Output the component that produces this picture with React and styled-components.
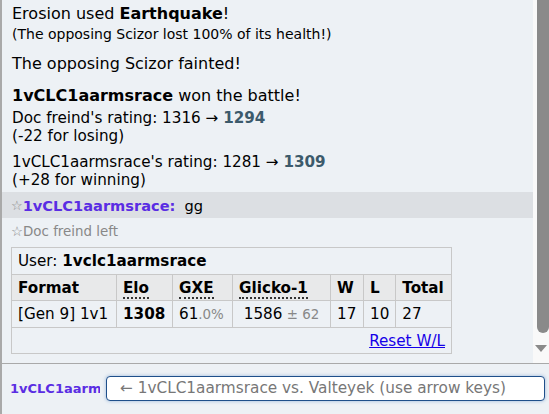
import React from "react";
import styled, { createGlobalStyle } from "styled-components";

const Global = createGlobalStyle`
  html, body { margin: 0; padding: 0; }
  body {
    width: 549px; height: 414px; overflow: hidden;
    background: #edf1f5;
    font-family: "DejaVu Sans", Verdana, sans-serif;
    color: #000;
  }
`;

const Page = styled.div`
  width: 549px;
  height: 414px;
  display: flex;
  flex-direction: column;
  box-sizing: border-box;
  border-left: 2px solid #a9a9a9;
  background: #edf1f5;
`;

const LogArea = styled.div`
  position: relative;
  flex: 1;
  overflow: hidden;
  border-bottom: 1px solid #a9a9a9;
`;

const Log = styled.div`
  padding-top: 4px;
  width: 531px;
  box-sizing: border-box;
`;

const Line = styled.div`
  padding-left: 10px;
  font-size: ${(p) => p.$size || 16}px;
  line-height: ${(p) => p.$lh || 19}px;
  margin-top: ${(p) => p.$mt || 0}px;
`;

const Strong = styled.strong`
  color: ${(p) => p.$color || "inherit"};
`;

const ChatRow = styled.div`
  margin-top: 3px;
  background: #dcdfe3;
  height: 26px;
  display: flex;
  align-items: center;
  padding-left: 9px;
  font-size: 14.6px;
`;

const Star = styled.span`
  color: #888;
  font-size: 13px;
`;

const ChatName = styled.strong`
  color: #5a2de3;
  margin-right: 9px;
`;

const Notice = styled.div`
  margin-top: 6px;
  padding-left: 9px;
  font-size: 13.4px;
  line-height: 16px;
  color: #888;
`;

const Table = styled.table`
  margin: 7px 0 0 9px;
  border-collapse: collapse;
  border: 1px solid #bdbdbd;
  font-size: 15.2px;
  width: 441px;
`;

const Cell = styled.td`
  border: 1px solid #c8c8c8;
  height: ${(p) => p.$h || 25}px;
  padding: 0 6px;
  text-align: ${(p) => p.$align || "left"};
  font-weight: ${(p) => (p.$bold ? "bold" : "normal")};
  white-space: nowrap;
`;

const Head = styled.th`
  border: 1px solid #c8c8c8;
  background: #e8e9ea;
  height: 25px;
  padding: 0 6px;
  text-align: left;
  white-space: nowrap;
  width: ${(p) => p.$w || "auto"};
`;

const Abbr = styled.span`
  border-bottom: 2px dotted #333;
`;

const Faint = styled.small`
  color: #888;
  font-size: 13.4px;
`;

const ResetLink = styled.a`
  color: #1500e8;
  text-decoration: underline;
  cursor: pointer;
`;

const ScrollTrack = styled.div`
  position: absolute;
  top: 0;
  right: 0;
  width: 16px;
  bottom: 0;
  background: #f9f9f9;
`;

const ScrollThumb = styled.div`
  position: absolute;
  top: -10px;
  right: 0;
  width: 12px;
  height: 343px;
  background: #8a8a8a;
  border-radius: 0 0 6px 6px;
`;

const Arrow = styled.div`
  position: absolute;
  right: 2px;
  top: 345px;
  width: 0;
  height: 0;
  border-left: 6px solid transparent;
  border-right: 6px solid transparent;
  border-top: 7px solid #8a8a8a;
`;

const ChatBar = styled.div`
  height: 50px;
  display: flex;
  align-items: center;
  padding: 0 4px 2px 8px;
  box-sizing: border-box;
  gap: 6px;
`;

const BarName = styled.div`
  width: 90px;
  flex: none;
  overflow: hidden;
  white-space: nowrap;
  font-weight: bold;
  color: #5a2de3;
  font-size: 13px;
`;

const Input = styled.div`
  flex: 1;
  height: 25px;
  box-sizing: border-box;
  border: 1px solid #1f4f8a;
  border-radius: 4px;
  background: #fff;
  box-shadow: 0 0 3px 1px rgba(90, 140, 200, 0.35);
  display: flex;
  align-items: center;
  padding-left: 13px;
  font-size: 15.3px;
  color: #777;
  white-space: nowrap;
  overflow: hidden;
`;

export default function App() {
  return (
    <>
      <Global />
      <Page>
        <LogArea>
          <Log>
            <Line>
              Erosion used <strong>Earthquake</strong>!
            </Line>
            <Line $size={14} $lh={17} $mt={3}>
              (The opposing Scizor lost 100% of its health!)
            </Line>
            <Line $mt={11}>The opposing Scizor fainted!</Line>
            <Line $mt={13}>
              <strong>1vCLC1aarmsrace</strong> won the battle!
            </Line>
            <Line $size={15.2} $lh={18} $mt={4}>
              Doc freind's rating: 1316 &rarr; <Strong $color="#3c5a6b">1294</Strong>
            </Line>
            <Line $size={15.2} $lh={18}>(-22 for losing)</Line>
            <Line $size={15.2} $lh={18} $mt={8}>
              1vCLC1aarmsrace's rating: 1281 &rarr; <Strong $color="#3c5a6b">1309</Strong>
            </Line>
            <Line $size={15.2} $lh={18}>(+28 for winning)</Line>
            <ChatRow>
              <Star>☆</Star>
              <ChatName>1vCLC1aarmsrace:</ChatName>
              gg
            </ChatRow>
            <Notice>☆Doc freind left</Notice>
            <Table>
              <tbody>
                <tr>
                  <Cell colSpan={7} $h={26}>
                    User: <strong>1vclc1aarmsrace</strong>
                  </Cell>
                </tr>
                <tr>
                  <Head $w="92px">Format</Head>
                  <Head $w="43px"><Abbr>Elo</Abbr></Head>
                  <Head $w="47px"><Abbr>GXE</Abbr></Head>
                  <Head $w="85px"><Abbr>Glicko-1</Abbr></Head>
                  <Head $w="20px">W</Head>
                  <Head $w="19px">L</Head>
                  <Head>Total</Head>
                </tr>
                <tr>
                  <Cell $h={26}>[Gen 9] 1v1</Cell>
                  <Cell $bold>1308</Cell>
                  <Cell>61<Faint>.0%</Faint></Cell>
                  <Cell $align="center">1586<Faint> ± 62</Faint></Cell>
                  <Cell>17</Cell>
                  <Cell>10</Cell>
                  <Cell>27</Cell>
                </tr>
                <tr>
                  <Cell colSpan={7} $align="right">
                    <ResetLink>Reset W/L</ResetLink>
                  </Cell>
                </tr>
              </tbody>
            </Table>
          </Log>
          <ScrollTrack>
            <ScrollThumb />
            <Arrow />
          </ScrollTrack>
        </LogArea>
        <ChatBar>
          <BarName>1vCLC1aarmsrace</BarName>
          <Input>← 1vCLC1aarmsrace vs. Valteyek (use arrow keys)</Input>
        </ChatBar>
      </Page>
    </>
  );
}
